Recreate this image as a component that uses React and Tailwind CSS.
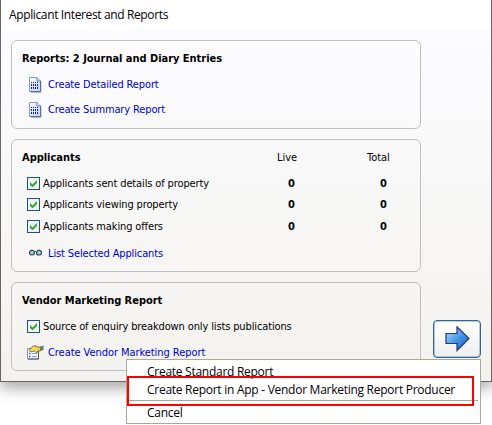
import React from "react";

const tahoma = "font-['DejaVu_Sans_Condensed','DejaVu_Sans',sans-serif] [font-stretch:condensed]";
const segoe = "font-['Open_Sans','Noto_Sans',sans-serif] [font-stretch:normal]";

function PageIcon() {
  return (
    <svg width="13" height="16" viewBox="0 0 13 16" className="mb-px block shrink-0">
      <defs>
        <linearGradient id="page" x1="0" y1="0" x2="1" y2="1">
          <stop offset="0" stopColor="#ffffff" />
          <stop offset="1" stopColor="#b9d2f7" />
        </linearGradient>
      </defs>
      <path d="M2 15.500h10V4.500" fill="none" stroke="#b3b7ba" />
      <path d="M.5 .5H8L11.500 4v10.500H.5z" fill="url(#page)" stroke="#7f9dc8" />
      <path d="M8 .5V4h3.500" fill="#dfeafb" stroke="#5f7dac" />
      <path d="M11.500 4v10.500H1" fill="none" stroke="#5a6f92" />
      <path
        d="M2 5h1v1H2zM4 5h1v1H4zM6 5h1v1H6zM8 5h1v1H8zM2 7h1v2H2zM4 7h1v2H4zM6 7h1v2H6zM8 7h1v2H8zM2 10h1v2H2zM4 10h1v2H4zM6 10h1v2H6zM8 10h1v2H8z"
        fill="#1414ff"
      />
    </svg>
  );
}

function GlassesIcon() {
  return (
    <svg width="13" height="7" viewBox="0 0 13 7" className="mb-[3px] block shrink-0">
      <path d="M1 2Q2.500 .5 4.500 1.500M8.500 1.500q2-1 3.500 .5M5 3q1.500-1 3 0" fill="none" stroke="#555" />
      <rect x=".6" y="1.500" width="4.800" height="4.500" rx="2" fill="#8fdcf0" stroke="#303c42" strokeWidth="1.200" />
      <rect x="7.600" y="1.500" width="4.800" height="4.500" rx="2" fill="#8fdcf0" stroke="#303c42" strokeWidth="1.200" />
    </svg>
  );
}

function PropertiesIcon() {
  return (
    <svg width="17" height="15" viewBox="0 0 17 15" className="mb-[2px] block shrink-0">
      <path d="M.5 3.500h11v10.500H.5z" fill="#f4f8ff" stroke="#8394ae" />
      <path d="M11.500 6v8H1" fill="none" stroke="#4a5468" />
      <path d="M2 8.500h1.500M2 11.500h1.500" stroke="#3568c8" strokeWidth="1.500" />
      <path d="M5 8.500h5M5 11.500h5" stroke="#7c9bd0" />
      <path d="M2 5.500L5.500 1.500 8 .7l3 1.300h2.500V5.800L11 6 9.500 8 8 6.500 6.500 6 4 7z" fill="#f3c94f" stroke="#6b5720" strokeWidth=".8" />
      <path d="M3.500 5.500L7 2M5 6l3-3M7.500 6l2-2.500" stroke="#fff0a4" strokeWidth=".8" />
      <path d="M13 1.500l3.500-1v4.500l-3.500 1z" fill="#55866e" />
    </svg>
  );
}

function Check() {
  return (
    <span className="mb-[2px] flex h-[13px] w-[13px] shrink-0 items-center justify-center border border-[#1c5180] bg-[#f1f2f1]">
      <svg width="9" height="9" viewBox="0 0 9 9" className="block">
        <path d="M1 3v3l2.500 2.300L8 4V1L3.500 5.500z" fill="#2fa52f" />
      </svg>
    </span>
  );
}

function Panel({ className, title, children }) {
  return (
    <section className={"rounded-[6px] border border-[#c0c0c0] pl-[10px] " + className}>
      <h2 className="flex h-[36px] items-center text-[11px] font-bold tracking-[-0.03px]">{title}</h2>
      {children}
    </section>
  );
}

function Link({ className, text, icon }) {
  return (
    <a className={"flex items-center text-[#0000cc] " + className}>
      <span className="flex w-[19px] shrink-0 justify-start">{icon}</span>
      <span className="whitespace-nowrap">{text}</span>
    </a>
  );
}

function Count({ label, className }) {
  return (
    <div className={"flex items-center " + className}>
      <Check />
      <span className="ml-[3px] w-[243px] whitespace-nowrap">{label}</span>
      <b className="w-[94px] pl-[2px]">0</b>
      <b>0</b>
    </div>
  );
}

export default function App() {
  return (
    <div className={"relative h-[425px] w-[492px] overflow-hidden bg-white text-[11px] leading-[16px] tracking-[-0.13px] text-black " + tahoma}>
      <main className="flex h-[382px] w-[492px] flex-col border-x border-b border-[#666666] bg-white shadow-[0_6px_14px_rgba(0,0,0,0.35)]">
        <header className={"flex h-[30px] shrink-0 items-center pl-[8px] text-[12px] tracking-[-0.37px] " + segoe}>
          Applicant Interest and Reports
        </header>
        <div className="flex flex-1 bg-linear-to-b from-[#fcfcff] to-[#f3f2ee] pt-[10px] pl-[10px]">
          <div className="flex w-[410px] shrink-0 flex-col gap-[10px]">
            <Panel className="h-[89px]" title="Reports: 2 Journal and Diary Entries">
              <Link className="h-[16px] pl-[7px]" icon={<PageIcon />} text="Create Detailed Report" />
              <Link className="mt-[9px] h-[16px] pl-[7px]" icon={<PageIcon />} text="Create Summary Report" />
            </Panel>
            <Panel
              className="h-[133px]"
              title={
                <>
                  <span className="w-[255px]">Applicants</span>
                  <span className="w-[90px] font-normal">Live</span>
                  <span className="font-normal">Total</span>
                </>
              }
            >
              <div className="pl-[5px]">
                <Count className="h-[16px]" label="Applicants sent details of property" />
                <Count className="mt-[5px] h-[16px]" label="Applicants viewing property" />
                <Count className="mt-[6px] h-[16px]" label="Applicants making offers" />
              </div>
              <Link className="mt-[11px] h-[16px] pl-[7px]" icon={<GlassesIcon />} text="List Selected Applicants" />
            </Panel>
            <Panel className="h-[89px]" title="Vendor Marketing Report">
              <div className="flex h-[16px] items-center pl-[5px]">
                <Check />
                <span className="ml-[3px] whitespace-nowrap">Source of enquiry breakdown only lists publications</span>
              </div>
              <Link
                className="mt-[10px] h-[16px] pl-[5px] tracking-[-0.06px] [&>span:first-child]:w-[21px]"
                icon={<PropertiesIcon />}
                text="Create Vendor Marketing Report"
              />
            </Panel>
          </div>
          <button className="mt-[280px] ml-[12px] flex h-[38px] w-[48px] items-center justify-center rounded-[4px] border border-[#2f6497] bg-linear-to-b from-white to-[#eeeeee] shadow-[inset_0_0_0_1px_rgba(60,110,160,0.35)]">
            <svg width="25" height="26" viewBox="0 0 25 26" className="block">
              <defs>
                <linearGradient id="arrow" x1="0" y1="0" x2="1" y2="1">
                  <stop offset="0" stopColor="#b5e4ff" />
                  <stop offset=".55" stopColor="#3f91e4" />
                  <stop offset="1" stopColor="#1762bd" />
                </linearGradient>
              </defs>
              <path d="M1 7.500h11V.8L24 12.500 12 24.500V17.500H1z" fill="url(#arrow)" stroke="#243574" strokeWidth="1.200" />
            </svg>
          </button>
        </div>
      </main>
      <div
        className={
          "absolute top-[359px] left-[126px] h-[65px] w-[355px] border border-[#aca899] bg-white text-[12px] leading-[18px] tracking-[-0.27px] " + segoe
        }
      >
        <div className="mt-[3px] h-[18px] pl-[20px]">Create Standard Report</div>
        <div className="h-[18px] pl-[20px] whitespace-nowrap">Create Report in App - Vendor Marketing Report Producer</div>
        <div className="mx-[2px] mt-[1px] h-px bg-[#aca899]" />
        <div className="mt-[3px] h-[18px] pl-[20px]">Cancel</div>
      </div>
      <div className="absolute top-[376px] left-[127px] h-[30px] w-[347px] border-2 border-[#ff0000]" />
    </div>
  );
}
